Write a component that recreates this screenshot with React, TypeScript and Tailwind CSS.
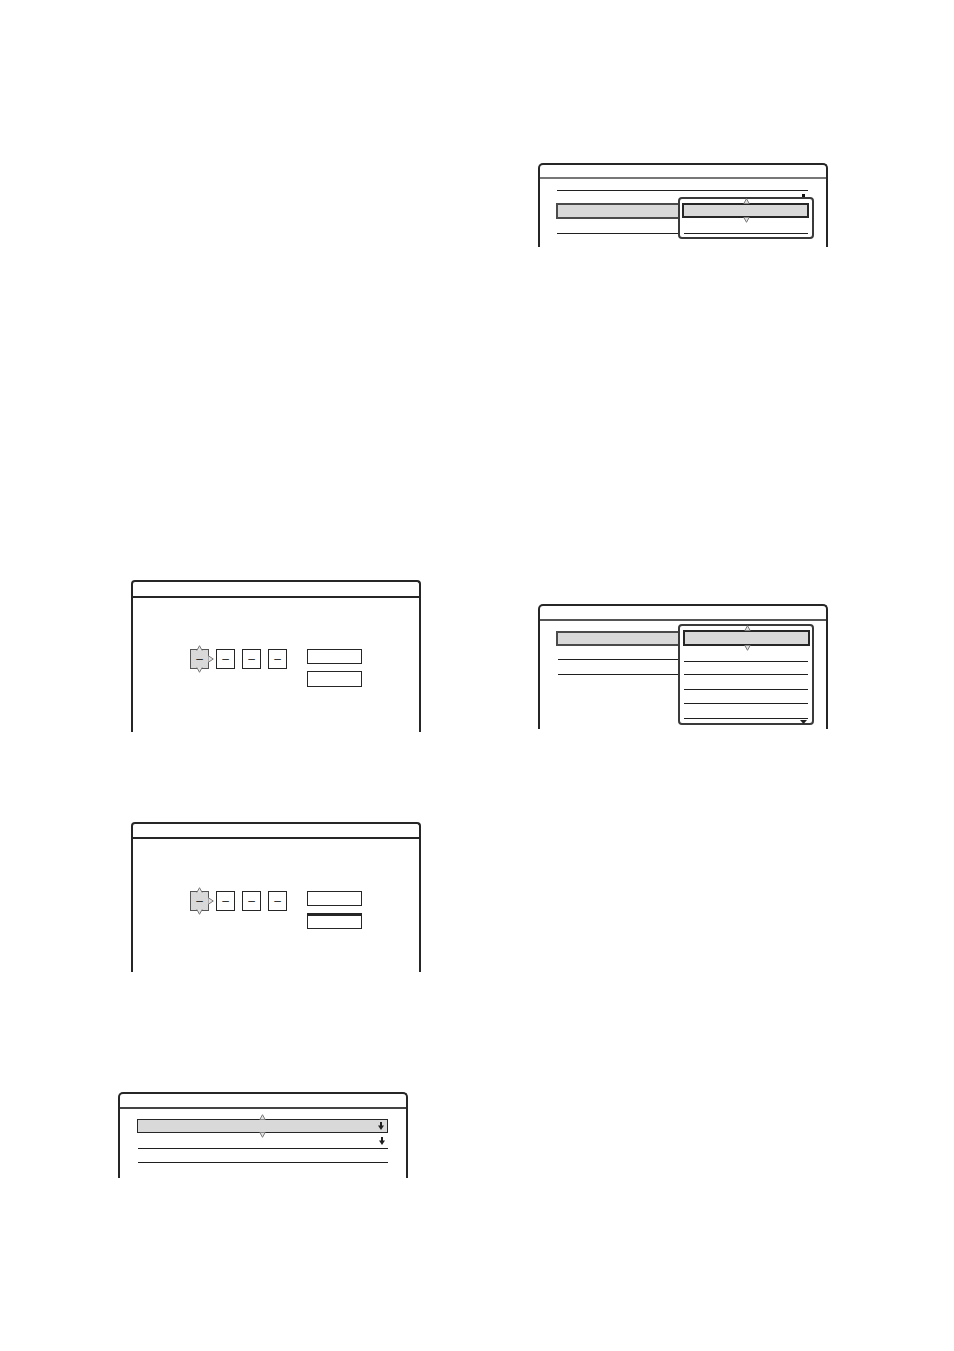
import React from 'react'

const UpMark = ({ className = '' }: { className?: string }) => (
  <svg width="7" height="6" viewBox="0 0 7 6" className={`absolute ${className}`}>
    <path d="M0.8 5.6 L3.5 0.7 L6.2 5.6" fill="#e4e4e4" stroke="#7a7a7a" strokeWidth="1" />
  </svg>
)

const DownMark = ({ className = '' }: { className?: string }) => (
  <svg width="7" height="6" viewBox="0 0 7 6" className={`absolute ${className}`}>
    <path d="M0.8 0.4 L3.5 5.3 L6.2 0.4" fill="#e4e4e4" stroke="#7a7a7a" strokeWidth="1" />
  </svg>
)

const RightMark = ({ className = '' }: { className?: string }) => (
  <svg width="6" height="8" viewBox="0 0 6 8" className={`absolute ${className}`}>
    <path d="M0.4 0.8 L5.3 4 L0.4 7.2" fill="#e4e4e4" stroke="#7a7a7a" strokeWidth="1" />
  </svg>
)

const BoldDown = () => (
  <svg width="6" height="8" viewBox="0 0 6 8" className="block">
    <rect x="2" y="0" width="2" height="4.5" fill="#1f1f1f" />
    <path d="M0 3.6 L6 3.6 L3 8 Z" fill="#1f1f1f" />
  </svg>
)

const Line = ({ className = '' }: { className?: string }) => (
  <div className={`h-px bg-[#1f1f1f] ${className}`} />
)

const Digit = ({ active = false }: { active?: boolean }) => (
  <div
    className={`relative w-[19px] h-[20px] flex items-center justify-center border-[1.5px] ${
      active ? 'bg-[#d9d9d9] border-[#555]' : 'bg-white border-[#262626]'
    }`}
  >
    <span className="text-[12px] leading-none text-[#1f1f1f] font-['Liberation_Sans',Arial,sans-serif]">–</span>
    {active && (
      <>
        <UpMark className="left-[4.5px] -top-[5px]" />
        <DownMark className="left-[4.5px] -bottom-[5px]" />
        <RightMark className="-right-[6px] top-[5px]" />
      </>
    )}
  </div>
)

const CodeScreen = ({ title, top, gapTop, secondThick }: { title: number; top: number; gapTop: string; secondThick?: boolean }) => (
  <div className={`w-[290px] border-2 border-b-0 border-[#262626] rounded-t-[4px] ${top === 152 ? 'h-[152px]' : 'h-[150px]'}`}>
    <div className={`border-b-2 border-[#262626] ${title === 16 ? 'h-[16px]' : 'h-[15px]'}`} />
    <div className={`flex items-start ml-[57px] ${gapTop}`}>
      <div className="flex gap-[7px]">
        <Digit active />
        <Digit />
        <Digit />
        <Digit />
      </div>
      <div className="ml-[20px] flex flex-col gap-[7px]">
        <div className="w-[55px] h-[15px] border-[1.5px] border-[#262626]" />
        <div
          className={`w-[55px] h-[16px] border-[1.5px] border-[#262626] ${secondThick ? 'border-t-[3px]' : ''}`}
        />
      </div>
    </div>
  </div>
)

const ScreenA = () => (
  <div className="w-[290px] h-[84px] border-2 border-b-0 border-[#262626] rounded-t-[5px]">
    <div className="h-[14px] border-b-2 border-[#777]" />
    <div className="relative flex flex-col items-start">
      <Line className="ml-[17px] mt-[11px] w-[251px]" />
      <div className="ml-[16px] mt-[12px] w-[126px] h-[16px] bg-[#d9d9d9] border-2 border-r-0 border-[#4a4a4a]" />
      <Line className="ml-[17px] mt-[14px] w-[251px]" />
      <div className="absolute left-[262px] top-[15px] w-[3px] h-[4px] bg-[#111]" />
      <div className="absolute left-[138px] top-[18px] w-[136px] h-[42px] bg-white border-2 border-[#3a3a3a] rounded-[4px]">
        <div className="relative ml-[2px] mt-[4px] w-[127px] h-[15px] bg-[#d9d9d9] border-2 border-[#262626]">
          <UpMark className="left-[59px] -top-[7px]" />
          <DownMark className="left-[59px] -bottom-[7px]" />
        </div>
        <Line className="ml-[4px] mt-[15px] w-[124px]" />
      </div>
    </div>
  </div>
)

const ScreenE = () => (
  <div className="w-[290px] h-[125px] border-2 border-b-0 border-[#262626] rounded-t-[5px]">
    <div className="h-[15px] border-b-2 border-[#555]" />
    <div className="relative flex flex-col items-start">
      <div className="ml-[16px] mt-[10px] w-[126px] h-[15px] bg-[#d9d9d9] border-2 border-r-0 border-[#4a4a4a]" />
      <Line className="ml-[18px] mt-[13px] w-[124px]" />
      <Line className="ml-[18px] mt-[14px] w-[124px]" />
      <div className="absolute left-[138px] top-[3px] w-[136px] h-[101px] bg-white border-2 border-[#3a3a3a] rounded-[4px]">
        <div className="relative ml-[3px] mt-[4px] w-[127px] h-[16px] bg-[#d9d9d9] border-2 border-[#262626]">
          <UpMark className="left-[59px] -top-[7px]" />
          <DownMark className="left-[59px] -bottom-[7px]" />
        </div>
        <Line className="ml-[4px] mt-[15px] w-[124px]" />
        <Line className="ml-[4px] mt-[12px] w-[124px]" />
        <Line className="ml-[4px] mt-[14px] w-[124px]" />
        <Line className="ml-[4px] mt-[13px] w-[124px]" />
        <Line className="ml-[4px] mt-[14px] w-[124px]" />
        <div className="flex justify-end pr-[5px] mt-[1px]">
          <svg width="7" height="4" viewBox="0 0 7 4" className="block">
            <path d="M0 0 L7 0 L3.5 4 Z" fill="#1f1f1f" />
          </svg>
        </div>
      </div>
    </div>
  </div>
)

const ScreenD = () => (
  <div className="w-[290px] h-[86px] border-2 border-b-0 border-[#262626] rounded-t-[5px]">
    <div className="h-[15px] border-b-2 border-[#444]" />
    <div className="relative ml-[17px] mt-[10px] w-[251px] h-[14px] bg-[#d9d9d9] border-[1.5px] border-[#262626] flex items-center justify-end pr-[3px]">
      <BoldDown />
      <UpMark className="left-[121px] -top-[6px]" />
      <DownMark className="left-[121px] -bottom-[6px]" />
    </div>
    <div className="ml-[17px] w-[251px] h-[15px] flex items-center justify-end pr-[3px]">
      <BoldDown />
    </div>
    <Line className="ml-[18px] w-[250px]" />
    <Line className="ml-[18px] mt-[13px] w-[250px]" />
  </div>
)

export default function App() {
  return (
    <div className="w-full min-h-[1351px] bg-white flex">
      <div className="w-[538px] pl-[118px] flex flex-col">
        <div className="ml-[13px] mt-[580px]">
          <CodeScreen title={16} top={152} gapTop="mt-[51px]" />
        </div>
        <div className="ml-[13px] mt-[90px]">
          <CodeScreen title={15} top={150} gapTop="mt-[52px]" secondThick />
        </div>
        <div className="mt-[120px]">
          <ScreenD />
        </div>
      </div>
      <div className="flex flex-col">
        <div className="mt-[163px]">
          <ScreenA />
        </div>
        <div className="mt-[357px]">
          <ScreenE />
        </div>
      </div>
    </div>
  )
}
